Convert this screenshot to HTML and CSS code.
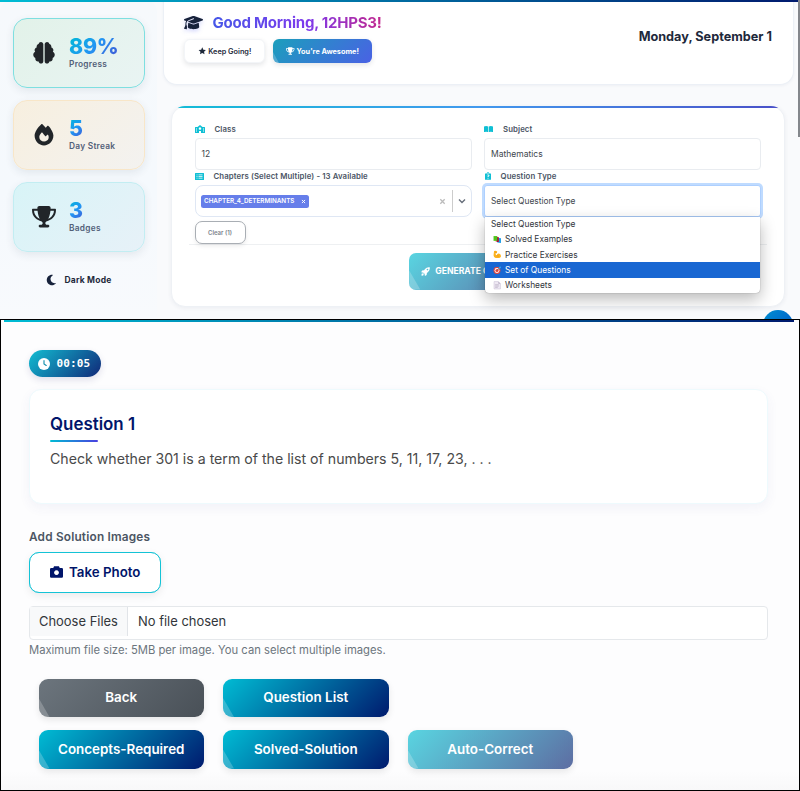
FILE: index.html
```html
<!DOCTYPE html>
<html lang="en">
<head>
<meta charset="utf-8">
<title>Study Dashboard</title>
<link rel="stylesheet" href="styles.css">
</head>
<body>
<section class="dashboard">
  <aside class="sidebar">
    <div class="stat stat-progress">
      <svg class="stat-icon" viewBox="0 0 512 512"><path d="M184 0c30.9 0 56 25.1 56 56V456c0 30.9-25.1 56-56 56c-28.9 0-52.7-21.9-55.7-50.1c-5.2 1.4-10.7 2.1-16.3 2.1c-35.3 0-64-28.7-64-64c0-7.4 1.3-14.6 3.6-21.2C21.4 367.4 0 338.2 0 304c0-31.9 18.7-59.5 45.8-72.3C37.1 220.8 32 207 32 192c0-30.7 21.6-56.3 50.4-62.6C80.8 123.9 80 118 80 112c0-29.9 20.6-55.1 48.3-62.1C131.3 21.9 155.1 0 184 0zM328 0c28.9 0 52.6 21.9 55.7 49.9c27.8 7 48.3 32.1 48.3 62.1c0 6-.8 11.9-2.4 17.4c28.8 6.2 50.4 31.9 50.4 62.6c0 15-5.1 28.8-13.8 39.7C493.3 244.5 512 272.1 512 304c0 34.2-21.4 63.4-51.6 74.8c2.3 6.6 3.6 13.8 3.6 21.2c0 35.3-28.7 64-64 64c-5.6 0-11.1-.7-16.3-2.1c-3 28.2-26.8 50.1-55.7 50.1c-30.9 0-56-25.1-56-56V56c0-30.9 25.1-56 56-56z"/></svg>
      <div class="stat-text"><div class="stat-value">89%</div><div class="stat-label">Progress</div></div>
    </div>
    <div class="stat stat-streak">
      <svg class="stat-icon" viewBox="0 0 448 512"><path d="M159.3 5.4c7.8-7.3 19.9-7.2 27.7 .1c27.6 25.9 53.5 53.8 77.7 84c11-14.4 23.5-30.1 37-42.9c7.9-7.4 20.1-7.4 28 .1c34.6 33 63.9 76.6 84.5 118c20.3 40.8 33.8 82.5 33.8 111.9C448 404.2 348.2 512 224 512C98.4 512 0 404.1 0 276.5c0-38.4 17.8-85.3 45.4-131.7C73.3 97.7 112.7 48.6 159.3 5.4zM225.7 416c25.3 0 47.7-7 68.8-21c42.1-29.4 53.4-88.2 28.1-134.4c-4.5-9-16-9.6-22.5-2l-25.2 29.3c-6.6 7.6-18.5 7.4-24.7-.5c-16.5-21-46-58.5-62.8-79.8c-6.3-8-18.3-8.1-24.7-.1c-33.8 42.5-50.8 69.3-50.8 99.4C112 375.4 162.6 416 225.7 416z"/></svg>
      <div class="stat-text"><div class="stat-value">5</div><div class="stat-label">Day Streak</div></div>
    </div>
    <div class="stat stat-badges">
      <svg class="stat-icon" viewBox="0 0 576 512"><path d="M400 0L176 0c-26.5 0-48.1 21.8-47.1 48.2c.2 5.3 .4 10.6 .7 15.8L24 64C10.7 64 0 74.7 0 88c0 92.6 33.5 157 78.5 200.7c44.3 43.1 98.3 64.8 138.1 75.8c23.4 6.5 39.4 26 39.4 45.6c0 20.9-17 37.9-37.9 37.9L192 448c-17.7 0-32 14.3-32 32s14.3 32 32 32l192 0c17.7 0 32-14.3 32-32s-14.3-32-32-32l-26.1 0C337 448 320 431 320 410.1c0-19.6 15.9-39.2 39.4-45.6c39.9-11 93.9-32.7 138.2-75.8C542.5 245 576 180.6 576 88c0-13.3-10.7-24-24-24L446.4 64c.3-5.2 .5-10.4 .7-15.8C448.1 21.8 426.5 0 400 0zM48.9 112l84.4 0c9.1 90.1 29.2 150.3 51.9 190.6c-24.9-11-50.8-26.5-73.2-48.3c-32-31.1-58-76-63-142.3zM464.1 254.3c-22.4 21.8-48.3 37.3-73.2 48.3c22.7-40.3 42.8-100.5 51.9-190.6l84.4 0c-5.1 66.3-31.1 111.2-63 142.3z"/></svg>
      <div class="stat-text"><div class="stat-value">3</div><div class="stat-label">Badges</div></div>
    </div>
    <div class="theme-toggle">
      <svg class="moon" viewBox="0 0 384 512"><path d="M223.5 32C100 32 0 132.3 0 256S100 480 223.5 480c60.6 0 115.5-24.2 155.8-63.4c5-4.9 6.3-12.5 3.1-18.7s-10.1-9.7-17-8.5c-9.8 1.7-19.8 2.6-30.1 2.6c-96.9 0-175.5-78.8-175.5-176c0-65.8 36-123.1 89.3-153.3c6.1-3.5 9.2-10.5 7.7-17.3s-7.3-11.9-14.3-12.5c-6.3-.5-12.6-.8-19-.8z"/></svg>
      <span>Dark Mode</span>
    </div>
  </aside>
  <main class="content">
    <header class="welcome">
      <div class="welcome-main">
        <div class="greeting">
          <svg class="cap" viewBox="0 0 640 512"><path d="M320 32c-8.1 0-16.1 1.4-23.7 4.1L15.8 137.4C6.3 140.9 0 149.9 0 160s6.3 19.1 15.8 22.6l57.9 20.9C57.3 229.3 48 259.8 48 291.9v28.1c0 28.4-10.8 57.7-22.3 80.8c-6.5 13-13.9 25.8-22.5 37.6C0 442.7-.9 448.3 .9 453.4s6 8.9 11.2 10.2l64 16c4.2 1.1 8.7 .3 12.4-2s6.3-6.1 7.1-10.4c8.6-42.8 4.3-81.2-2.1-108.7C90.3 344.3 86 329.8 80 316.5V291.9c0-30.2 10.2-58.7 27.9-81.5c12.9-15.5 29.6-28 49.2-35.7l157-61.7c8.2-3.2 17.5 .8 20.7 9s-.8 17.5-9 20.7l-157 61.7c-12.4 4.9-23.3 12.4-32.2 21.6l159.6 57.6c7.6 2.7 15.6 4.1 23.7 4.1s16.1-1.4 23.7-4.1L624.2 182.6c9.5-3.4 15.8-12.5 15.8-22.6s-6.3-19.1-15.8-22.6L343.7 36.1C336.1 33.4 328.1 32 320 32zM128 408c0 35.3 86 72 192 72s192-36.7 192-72L496.7 262.6 354.5 314c-11.1 4-22.8 6-34.5 6s-23.5-2-34.5-6L143.3 262.6 128 408z"/></svg>
          <h1>Good Morning, 12HPS3!</h1>
        </div>
        <div class="cheers">
          <span class="pill pill-light"><svg viewBox="0 0 24 24"><path d="M12 1l3.300 7 7.700 1-5.600 5.300 1.400 7.700L12 18.300 5.200 22l1.400-7.700L1 9l7.700-1z"/></svg>Keep Going!</span>
          <span class="pill pill-blue shine"><svg viewBox="0 0 576 512"><path d="M400 0L176 0c-26.5 0-48.1 21.8-47.1 48.2c.2 5.3 .4 10.6 .7 15.8L24 64C10.7 64 0 74.7 0 88c0 92.6 33.5 157 78.5 200.7c44.3 43.1 98.3 64.8 138.1 75.8c23.4 6.5 39.4 26 39.4 45.6c0 20.9-17 37.9-37.9 37.9L192 448c-17.7 0-32 14.3-32 32s14.3 32 32 32l192 0c17.7 0 32-14.3 32-32s-14.3-32-32-32l-26.1 0C337 448 320 431 320 410.1c0-19.6 15.9-39.2 39.4-45.6c39.9-11 93.9-32.7 138.2-75.8C542.5 245 576 180.6 576 88c0-13.3-10.7-24-24-24L446.4 64c.3-5.2 .5-10.4 .7-15.8C448.1 21.8 426.5 0 400 0zM48.9 112l84.4 0c9.1 90.1 29.2 150.3 51.9 190.6c-24.9-11-50.8-26.5-73.2-48.3c-32-31.1-58-76-63-142.3zM464.1 254.3c-22.4 21.8-48.3 37.3-73.2 48.3c22.7-40.3 42.8-100.5 51.9-190.6l84.4 0c-5.1 66.3-31.1 111.2-63 142.3z"/></svg>You're Awesome!</span>
        </div>
      </div>
      <div class="date">Monday, September 1</div>
    </header>
    <div class="form-card">
      <div class="form-grid">
        <div class="field">
          <label class="label"><svg class="ico-school" viewBox="0 0 20 16"><path fill-rule="evenodd" d="M1 4h4l5-4 5 4h4q1 0 1 1v10q0 1-1 1h-7v-4H8v4H1q-1 0-1-1V5q0-1 1-1zM2 7v2h2V7zM2 11v2h2v-2zM16 7v2h2V7zM16 11v2h2v-2zM10 4.500a2.500 2.500 0 1 0 .01 0z"/></svg>Class</label>
          <div class="input">12</div>
        </div>
        <div class="field">
          <label class="label"><svg class="ico-book" viewBox="0 0 20 14"><path d="M0 1q5-2 9.300 0v12.500Q5 12 0 13.500zM10.700 1Q15-1 20 1v12.500q-5-1.500-9.300 0z"/></svg>Subject</label>
          <div class="input">Mathematics</div>
        </div>
        <div class="field">
          <label class="label label-chapters"><svg class="ico-list" viewBox="0 0 18 14"><path fill-rule="evenodd" d="M1 0h16q1 0 1 1v12q0 1-1 1H1q-1 0-1-1V1q0-1 1-1zM3 3v1.500h2V3zM7 3v1.500h8V3zM3 6.300v1.500h2V6.300zM7 6.300v1.500h8V6.300zM3 9.600v1.500h2V9.600zM7 9.600v1.500h8V9.600z"/></svg>Chapters (Select Multiple) - 13 Available</label>
          <div class="multi">
            <span class="chip">CHAPTER_4_DETERMINANTS<svg viewBox="0 0 8 8"><path d="M1.500 1.500l5 5M6.500 1.500l-5 5"/></svg></span>
            <svg class="multi-clear" viewBox="0 0 8 8"><path d="M1.500 1.500l5 5M6.500 1.500l-5 5"/></svg>
            <span class="multi-sep"></span>
            <svg class="multi-chevron" viewBox="0 0 10 8"><path d="M2 2.500l3 3 3-3"/></svg>
          </div>
          <button class="clear-btn">Clear (1)</button>
        </div>
        <div class="field field-select">
          <label class="label label-type"><svg class="ico-clip" viewBox="0 0 14 18"><path fill-rule="evenodd" d="M1 3h3q0-3 3-3t3 3h3q1 0 1 1v13q0 1-1 1H1q-1 0-1-1V4q0-1 1-1zM7 1.800a1.200 1.200 0 1 0 .01 0zM3.500 7.500h2q1.500-1 2.800 0 0 1.500-2.300 2v2.500h2v-1.500q2.500-.7 2.500-3Q9.500 5.500 7 5.500t-3.500 2zM6 13.500v2h2v-2z"/></svg>Question Type</label>
          <div class="select-open">Select Question Type</div>
          <ul class="menu">
            <li class="menu-head">Select Question Type</li>
            <li><svg viewBox="0 0 16 16"><path fill="#1e9ee8" d="M8 5l7 1v9l-7-1z"/><path fill="#e5173f" d="M5 3l6 1v9l-6-1z"/><path fill="#7b1730" d="M8 4l2 0v9H8z"/><path fill="#50c51c" d="M1 2l7 0v9H1z"/></svg>Solved Examples</li>
            <li><svg viewBox="0 0 16 16"><path fill="#fbb21f" d="M2 2q3-2 6 1l-1 3-2 0q-.5 3 2 4 1-4 5-3 3 1 3 5-1 3-5 3H5q-4-.5-4-5z"/><path fill="none" stroke="#e48b0c" d="M7 11q2-1 4 1M4 4l3 1"/></svg>Practice Exercises</li>
            <li class="active"><svg viewBox="0 0 16 16"><circle cx="7.500" cy="8.500" r="6.500" fill="#e6443b"/><circle cx="7.500" cy="8.500" r="4.600" fill="#fff"/><circle cx="7.500" cy="8.500" r="3" fill="#e6443b"/><path d="M8 8l5-5" stroke="#4b3b45" stroke-width="1.500"/><path fill="#33a8ed" d="M11 3l3-3v2h2l-3 3h-2z"/></svg>Set of Questions</li>
            <li><svg viewBox="0 0 16 16"><path fill="#eee8f3" stroke="#cbc1d5" d="M2 1h8l4 4v10H2z"/><path fill="#b9afc5" d="M10 1v4h4z"/><path d="M4 7h7M4 9.500h7M4 12h5" stroke="#aaa1b8"/></svg>Worksheets</li>
          </ul>
        </div>
      </div>
      <div class="actions">
        <button class="generate shine"><svg viewBox="0 0 16 16"><path fill-rule="evenodd" d="M15.500.5q1 5-3 8.500l-2 1.700-.5 3.600-3 1.700-.7-4-2-2-4-.7L2 6.200l3.500-.5L7.200 3.500Q10.500-.5 15.500.5zM11.500 3a1.400 1.400 0 1 0 .01 0zM1 12l3-1 1 1-1 3-3 .5z"/></svg><span>GENERATE Q</span></button>
      </div>
    </div>
    <span class="fab"></span>
  </main>
  <span class="scrollbar"></span>
</section>

<section class="question-screen">
  <div class="timer"><svg viewBox="0 0 16 16"><circle cx="8" cy="8" r="8" fill="#fff"/><path d="M8 3.500V8l3 2" fill="none" stroke="#128fad" stroke-width="1.500" stroke-linecap="round"/></svg><span>00:05</span></div>
  <article class="question">
    <h2>Question 1</h2>
    <p>Check whether 301 is a term of the list of numbers 5, 11, 17, 23, . . .</p>
  </article>
  <div class="upload">
    <div class="upload-title">Add Solution Images</div>
    <button class="photo"><svg viewBox="0 0 16 14"><path fill-rule="evenodd" d="M5 0h6l1 2h2.500Q16 2 16 3.500v9q0 1.500-1.500 1.500h-13Q0 14 0 12.500v-9Q0 2 1.500 2H4zM8 4.800a3 3 0 1 0 .01 0z"/></svg>Take Photo</button>
    <div class="file"><span class="file-btn">Choose Files</span><span class="file-name">No file chosen</span></div>
    <div class="hint">Maximum file size: 5MB per image. You can select multiple images.</div>
  </div>
  <div class="buttons">
    <button class="btn shine btn-gray">Back</button>
    <button class="btn shine">Question List</button>
    <button class="btn shine btn-start">Concepts-Required</button>
    <button class="btn shine">Solved-Solution</button>
    <button class="btn shine btn-faded">Auto-Correct</button>
  </div>
</section>
</body>
</html>
```
FILE: styles.css
```css
* { box-sizing: border-box; }
body { margin: 0; font-family: Inter, "Liberation Sans", sans-serif; color: #212529; }
h1, h2, p, ul { margin: 0; padding: 0; }
button { font-family: inherit; margin: 0; }
svg { display: block; flex: none; }

.dashboard {
  position: relative;
  display: grid;
  grid-template-columns: 157px 1fr;
  height: 319px;
  overflow: hidden;
  background: #f9fafc;
}
.dashboard::before {
  content: "";
  position: absolute;
  inset: 0 0 auto 0;
  height: 1.5px;
  background: linear-gradient(90deg, #00bcd4, #001a6e);
  z-index: 3;
}
.sidebar {
  display: flex;
  flex-direction: column;
  gap: 12px;
  padding: 18px 12px 0 13px;
  background: linear-gradient(180deg, #f6f9fc, #f5f9fd 60%, #f8fafd);
  border-radius: 12px 12px 0 0;
}
.stat {
  display: flex;
  align-items: center;
  height: 70px;
  border-radius: 14px;
  border: 1px solid;
  box-shadow: 0 3px 8px rgba(30, 50, 80, .09);
}
.stat-progress { background: linear-gradient(135deg, #e2f2e9, #e9f4f3); border-color: #7edfe0; }
.stat-streak { background: linear-gradient(135deg, #f7efdf, #f3f2f0); border-color: #f8e6c8; }
.stat-badges { background: linear-gradient(135deg, #d8f4f7, #e7f1f8); border-color: #c2edf2; }
.stat-icon { width: 24px; height: 21.5px; margin-left: 17.500px; fill: #212529; }
.stat-text { margin-left: 13.500px; padding-bottom: 2px; }
.stat-value {
  width: fit-content;
  font-size: 21.300px;
  line-height: 22px;
  font-weight: 800;
  letter-spacing: -.2px;
  background: linear-gradient(135deg, #00bcd4, #2196f3 50%, #4355d3);
  background-clip: text;
  color: transparent;
}
.stat-label { font-size: 8.300px; line-height: 11px; margin-top: 2px; font-weight: 600; letter-spacing: .28px; color: #526078; }
.theme-toggle { display: flex; align-items: center; gap: 8px; margin: 10px 0 0 33px; font-size: 8.500px; line-height: 12px; font-weight: 700; letter-spacing: .2px; color: #1e293b; }
.moon { width: 10.500px; height: 12px; fill: #17223b; }

.content { position: relative; padding: 0 7px 0 6px; }
.welcome {
  display: flex;
  justify-content: space-between;
  height: 85px;
  padding: 13px 20px 0;
  background: #fff;
  border: 1px solid #ecf0f6;
  border-top: 0;
  border-radius: 0 0 14px 14px;
  box-shadow: 0 1px 3px rgba(40, 60, 100, .05);
}
.greeting { display: flex; align-items: center; height: 19px; gap: 9.500px; }
.cap { width: 19px; height: 15.200px; fill: #17223b; filter: drop-shadow(0 2px 2px rgba(80, 90, 240, .25)); }
h1 {
  font-size: 15px;
  line-height: 20px;
  font-weight: 700;
  letter-spacing: -.22px;
  background: linear-gradient(90deg, #4657e8, #7c3aed 55%, #c2288e);
  background-clip: text;
  color: transparent;
}
.cheers { display: flex; gap: 8px; margin-top: 7px; }
.pill { display: flex; align-items: center; justify-content: center; gap: 2px; height: 24px; border-radius: 6px; font-size: 7.300px; font-weight: 600; white-space: nowrap; }
.pill svg { width: 8.500px; height: 8px; fill: currentColor; }
.pill-light { width: 81px; background: #fff; color: #1e293b; border: 1px solid #f3f5f8; box-shadow: 0 2px 5px rgba(30, 40, 60, .12); }
.pill-blue { width: 99px; color: #fff; font-weight: 700; background: linear-gradient(135deg, #1b9fbc, #4a61e4); box-shadow: 0 2px 5px rgba(30, 40, 60, .12); }
.date { font-size: 12.700px; font-weight: 700; line-height: 18px; padding: 15px 1px 0 0; color: #1e293b; }

.shine { position: relative; overflow: hidden; }
.shine::before {
  content: "";
  position: absolute;
  left: 0;
  bottom: 0;
  width: 11px;
  height: 19px;
  background: rgba(255, 255, 255, .22);
  clip-path: polygon(0 0, 100% 100%, 0 100%);
}
.pill.shine::before { width: 6px; height: 11px; }

.form-card {
  position: relative;
  height: 201px;
  margin: 21px 9px 0 8px;
  padding: 17px 23px 0 22.500px;
  background: #fff;
  border-radius: 14px;
  border: 1px solid #eef1f5;
  box-shadow: 0 1px 4px rgba(40, 60, 100, .07);
}
.form-card::before {
  content: "";
  position: absolute;
  inset: -1px;
  border-radius: 14px;
  background: linear-gradient(90deg, #12bcd6, #4299ee 50%, #4a4fc8) top / 100% 2px no-repeat;
}
.form-grid { position: relative; display: grid; grid-template-columns: 277px 277px; column-gap: 12.500px; }
.label { display: flex; align-items: center; height: 10px; font-size: 7.800px; font-weight: 600; letter-spacing: .1px; color: #4b5565; margin-bottom: 4px; }
.label svg { fill: #0fbfd4; }
.ico-school { width: 10px; height: 8px; margin-right: 10px; }
.ico-book { width: 9px; height: 6.500px; margin-right: 10px; }
.ico-list { width: 9px; height: 7px; margin-right: 10px; }
.ico-clip { width: 6px; height: 8px; margin-right: 9.500px; margin-left: 1px; }
.input { height: 32px; border: 1px solid #e9ecf0; border-radius: 4px; padding-left: 6px; line-height: 31px; font-size: 8.500px; color: #40464d; margin-bottom: 1px; }
.multi { display: flex; align-items: center; height: 32px; border: 1px solid #dfe7f4; border-radius: 8px; padding-left: 5.500px; }
.chip { display: flex; align-items: center; height: 13px; padding: 0 3px; border-radius: 2.500px; background: #667eea; color: #fff; font-size: 6.300px; font-weight: 600; }
.chip svg { width: 5px; height: 5px; margin-left: 7px; stroke: #fff; stroke-width: 1.500; }
.multi-clear { width: 7px; height: 7px; stroke: #bbb; stroke-width: 1.500; margin-left: auto; }
.multi-sep { width: 1px; height: 22px; background: #ccc; margin: 0 4px 0 6px; }
.multi-chevron { width: 10px; height: 8px; fill: none; stroke: #666e7a; stroke-width: 1.400; margin-right: 4px; }
.clear-btn { width: 51px; height: 23px; margin-top: 4px; padding: 0; border: 1px solid #a9aeb4; border-radius: 7px; background: #fff; font-size: 6px; font-weight: 600; color: #7b828b; box-shadow: 0 2px 4px rgba(0, 0, 0, .08); }
.field-select { position: relative; }
.select-open { height: 32px; border: 1px solid #aed0ff; border-radius: 3px; box-shadow: 0 0 0 2px #bfdbff; padding-left: 6px; line-height: 31px; font-size: 8.400px; color: #40464d; background: #fff; }
.menu {
  position: absolute;
  top: 46px;
  left: 1px;
  width: 275px;
  z-index: 2;
  list-style: none;
  background: #fff;
  border-radius: 0 0 4px 4px;
  box-shadow: 0 0 1px rgba(0, 0, 0, .5), 0 6px 16px rgba(0, 0, 0, .28);
}
.menu li { display: flex; align-items: center; height: 15.400px; padding-left: 7.500px; gap: 4px; font-size: 8.400px; color: #32363c; }
.menu svg { width: 8.500px; height: 8.500px; }
.menu .menu-head { padding-left: 6px; height: 14.500px; }
.menu .active { background: #1967d2; color: #fff; }
.actions { display: flex; justify-content: center; border-top: 1px solid #eef0f2; margin: 0 -6px; padding-top: 7.500px; }
.generate { display: flex; align-items: center; gap: 5px; width: 137px; height: 37px; border: 0; border-radius: 7px; padding: 0 0 0 12px; color: #fff; font-size: 8.600px; font-weight: 700; white-space: nowrap; background: linear-gradient(135deg, #59d5e1, #5d6da2); }
.generate svg { width: 9px; height: 9px; fill: #fff; }
.fab { position: absolute; left: 606px; top: 310px; width: 30px; height: 30px; border-radius: 50%; background: linear-gradient(135deg, #008fd0, #0050c8); }
.scrollbar { position: absolute; right: 0; top: 0; width: 2px; height: 137px; background: #84878c; z-index: 4; }

.question-screen {
  position: relative;
  height: 472px;
  padding: 30px 31px 0 28px;
  border: 1px solid #000;
  background: linear-gradient(180deg, #fdfdfe 96%, #f8f8f9);
}
.question-screen::before { content: ""; position: absolute; inset: 0 5px auto 3px; height: 2px; background: linear-gradient(90deg, #00bcd4, #001a6e); }
.timer { display: flex; align-items: center; gap: 7px; width: 72px; height: 27px; margin-left: -.5px; padding-left: 9px; border-radius: 14px; background: linear-gradient(135deg, #12bdd2, #102878); color: #fff; font: 700 11px/14px "DejaVu Sans Mono", monospace; letter-spacing: .15px; box-shadow: 0 3px 7px rgba(50, 40, 120, .14); }
.timer svg { width: 12px; height: 12px; }
.question { height: 115px; margin-top: 12px; padding: 23px 20px 0; background: #fff; border: 1px solid #eefafd; border-radius: 12px; box-shadow: 0 4px 12px rgba(60, 70, 150, .06); }
h2 { font-size: 16.900px; line-height: 22px; font-weight: 600; color: #00156a; }
h2::after { content: ""; display: block; width: 48px; height: 2.500px; margin-top: 4.500px; border-radius: 2px; background: linear-gradient(90deg, #00bcd4, #4a3fe0); }
.question p { margin-top: 6.500px; font-size: 14.150px; line-height: 20px; color: #4a4a4a; }
.upload-title { margin-top: 26px; font-size: 11.800px; line-height: 14px; font-weight: 600; letter-spacing: .2px; color: #4b5563; }
.photo { display: flex; align-items: center; justify-content: center; gap: 6.500px; width: 132px; height: 41px; margin-top: 8px; padding: 0 0 1px; border: 1.500px solid #14c3d6; outline: .5px solid rgba(20, 195, 214, .4); outline-offset: -1.500px; border-radius: 10px; background: #fff; color: #00156a; font-size: 13.300px; font-weight: 600; box-shadow: 0 3px 8px rgba(0, 0, 0, .08); }
.photo svg { width: 13px; height: 12px; fill: #00156a; }
.file { display: flex; height: 34px; margin-top: 13px; border: 1px solid #e5e8eb; border-radius: 4px; background: #fff; font-size: 12.950px; line-height: 29px; color: #32363a; }
.file-btn { width: 98px; height: 29px; padding-left: 9px; background: #f8f9fa; border-right: 1px solid #e1e4e8; white-space: nowrap; }
.file-name { padding-left: 10px; }
.hint { margin-top: 3px; font-size: 11.250px; line-height: 15px; color: #6c757d; }
.buttons { display: grid; grid-template-columns: repeat(3, 165.500px); gap: 13px 19px; margin: 20.500px 0 0 9.500px; }
.btn { height: 38.500px; border: 0; border-radius: 9px; padding: 0 0 1px; color: #fff; font-size: 13.400px; font-weight: 600; background: linear-gradient(135deg, #00bcd4, #001a6e); box-shadow: 0 3px 7px rgba(0, 0, 0, .09); }
.btn-gray { background: linear-gradient(135deg, #6c757d, #495057); }
.btn-start { grid-column: 1; }
.btn-faded { background: linear-gradient(135deg, #59d5e1, #5d6da2); }
```
